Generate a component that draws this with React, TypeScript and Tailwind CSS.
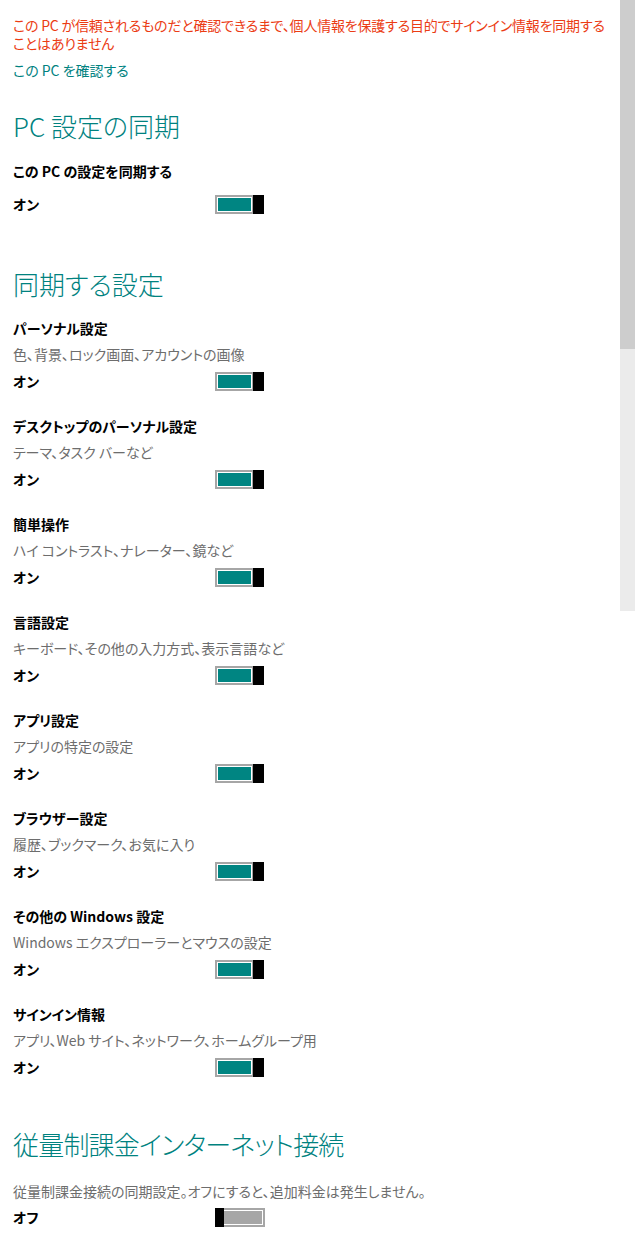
import React from 'react';

type Item = { label: string; desc: string };

const items: Item[] = [
  { label: 'パーソナル設定', desc: '色、背景、ロック画面、アカウントの画像' },
  { label: 'デスクトップのパーソナル設定', desc: 'テーマ、タスク バーなど' },
  { label: '簡単操作', desc: 'ハイ コントラスト、ナレーター、鏡など' },
  { label: '言語設定', desc: 'キーボード、その他の入力方式、表示言語など' },
  { label: 'アプリ設定', desc: 'アプリの特定の設定' },
  { label: 'ブラウザー設定', desc: '履歴、ブックマーク、お気に入り' },
  { label: 'その他の Windows 設定', desc: 'Windows エクスプローラーとマウスの設定' },
  { label: 'サインイン情報', desc: 'アプリ、Web サイト、ネットワーク、ホームグループ用' },
];

const Toggle: React.FC<{ on: boolean }> = ({ on }) =>
  on ? (
    <div className="flex h-[19px] w-[49px]">
      <div className="h-full w-[38px] border-y-2 border-l-2 border-r border-[#a6a6a6] bg-white p-[1px]">
        <div className="h-full w-full bg-[#008582]" />
      </div>
      <div className="h-full w-[11px] bg-black" />
    </div>
  ) : (
    <div className="flex h-[19px] w-[50px]">
      <div className="h-full w-[9px] bg-black" />
      <div className="h-full w-[41px] border-2 border-l-0 border-[#a6a6a6] bg-white py-[1px] pr-[1px]">
        <div className="h-full w-full bg-[#a6a6a6]" />
      </div>
    </div>
  );

const Row: React.FC<{ on: boolean; h: string }> = ({ on, h }) => (
  <div className={`flex items-center ${h}`}>
    <span className="w-[202px] text-[14px] font-bold text-black">{on ? 'オン' : 'オフ'}</span>
    <Toggle on={on} />
  </div>
);

export default function App() {
  return (
    <div className="flex min-h-[1235px] w-[635px] bg-white font-['Meiryo_UI','Noto_Sans_CJK_JP',sans-serif] [font-feature-settings:'palt']">
      <main className="flex-1 pl-[13px] pt-[16px]">
        <p className="text-[14px] leading-[18px] tracking-[-0.2px] text-[#eb3c14]">
          この PC が信頼されるものだと確認できるまで、個人情報を保護する目的でサインイン情報を同期する
          <br />
          ことはありません
        </p>
        <p className="mt-[9px] text-[14px] leading-[18px] text-[#00827f]">この PC を確認する</p>

        <h2 className="mt-[29px] text-[26px] font-light leading-[36px] text-[#00827f]">PC 設定の同期</h2>
        <div className="mt-[14px] text-[14px] font-bold leading-[26px] text-black">この PC の設定を同期する</div>
        <div className="mt-[6px]">
          <Row on h="h-[28px]" />
        </div>

        <h2 className="mt-[48px] text-[26px] font-light leading-[36px] text-[#00827f]">同期する設定</h2>
        <div className="mt-[13px] flex flex-col gap-[18px]">
          {items.map(it => (
            <div key={it.label}>
              <div className="text-[14px] font-bold leading-[26px] text-black">{it.label}</div>
              <div className="text-[14px] leading-[26px] text-[#6d6d6d]">{it.desc}</div>
              <Row on h="h-[28px]" />
            </div>
          ))}
        </div>

        <h2 className="mt-[45px] text-[26px] font-light leading-[36px] tracking-[-0.8px] text-[#00827f]">従量制課金インターネット接続</h2>
        <div className="mt-[16px] text-[14px] leading-[26px] text-[#6d6d6d]">
          従量制課金接続の同期設定。オフにすると、追加料金は発生しません。
        </div>
        <Row on={false} h="h-[26px]" />
      </main>
      <aside className="flex w-[15px] flex-col">
        <div className="h-[349px] bg-[#cdcdcd]" />
        <div className="h-[262px] bg-[#ebebeb]" />
      </aside>
    </div>
  );
}
